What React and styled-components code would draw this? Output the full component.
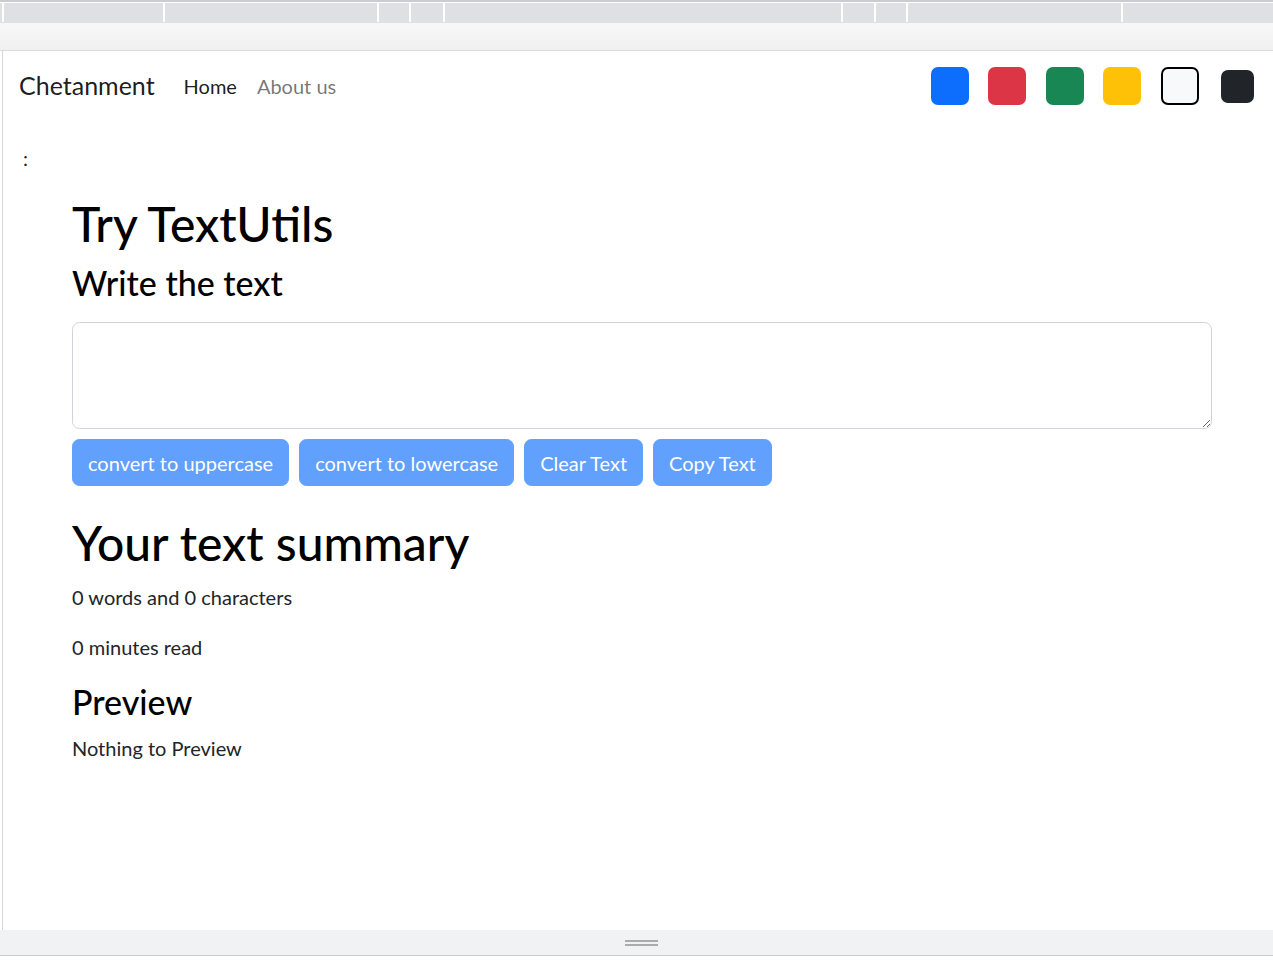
import React from 'react';
import styled, { createGlobalStyle } from 'styled-components';

const Global = createGlobalStyle`
  html, body {
    margin: 0;
    padding: 0;
    background: #ffffff;
  }
  body {
    font-family: Lato, "Open Sans", "Liberation Sans", sans-serif;
    color: #212529;
  }
  * {
    box-sizing: border-box;
  }
`;

const Frame = styled.div`
  width: 1273px;
  height: 960px;
  display: flex;
  flex-direction: column;
  overflow: hidden;
`;

const TopLine = styled.div`
  height: 3px;
  background: linear-gradient(#c9ccd2 0 2px, #ffffff 2px 3px);
`;

const TabStrip = styled.div`
  height: 20px;
  background: #dee0e4;
  display: flex;
  padding-left: 2px;
`;

const TabCell = styled.div`
  height: 19px;
  width: ${p => (p.$w ? `${p.$w}px` : 'auto')};
  flex: ${p => (p.$w ? 'none' : '1')};
  border-left: 2px solid #ffffff;
`;

const Toolbar = styled.div`
  height: 28px;
  background: linear-gradient(#f7f8f7, #eff0ef);
  border-bottom: 1px solid #dadbdb;
`;

const Viewport = styled.div`
  height: 879px;
  margin-left: 2px;
  border-left: 1px solid #d6d7d8;
  background: #ffffff;
  display: flex;
  flex-direction: column;
`;

const BottomBar = styled.div`
  height: 26px;
  background: #f1f2f4;
  border-bottom: 1px solid #c8cbd0;
  display: flex;
  align-items: center;
  justify-content: center;
`;

const Handle = styled.div`
  width: 33px;
  height: 6px;
  border-top: 2px solid #a9abae;
  border-bottom: 2px solid #a9abae;
  margin-left: 9px;
`;

const Navbar = styled.nav`
  height: 70px;
  padding: 0 16px;
  display: flex;
  align-items: center;
`;

const Brand = styled.a`
  font-size: 25px;
  color: rgba(0, 0, 0, 0.9);
  margin-right: 19px;
  line-height: 1.5;
  text-decoration: none;
`;

const NavLink = styled.a`
  font-size: 20px;
  padding: 0 10px;
  color: ${p => (p.$active ? 'rgba(0, 0, 0, 0.9)' : 'rgba(0, 0, 0, 0.55)')};
  text-decoration: none;
`;

const Swatches = styled.div`
  margin-left: auto;
  display: flex;
  align-items: center;
  gap: 19.5px;
  padding-right: 1px;
`;

const Swatch = styled.div`
  width: ${p => (p.$small ? 33 : 38)}px;
  height: ${p => (p.$small ? 33 : 38)}px;
  margin: ${p => (p.$small ? '0 2.5px' : '0')};
  border-radius: 7px;
  background: ${p => p.$color};
  border: ${p => (p.$outline ? '2px solid #000' : 'none')};
`;

const Colon = styled.div`
  height: 30px;
  margin-top: 22px;
  padding-left: 20px;
  font-size: 20px;
  line-height: 30px;
`;

const Container = styled.main`
  width: 1140px;
  margin-left: 69px;
  padding-top: 22px;
`;

const H1 = styled.h1`
  margin: 0 0 10px;
  font-size: 48px;
  font-weight: 500;
  line-height: 1.2;
  color: #000;
`;

const H2 = styled.h2`
  margin: 0 0 ${p => p.$mb || 10}px;
  font-size: 34px;
  font-weight: 500;
  line-height: 1.2;
  color: #000;
`;

const TextArea = styled.textarea`
  display: block;
  width: 1140px;
  height: 107px;
  border: 1px solid #d0d4d9;
  border-radius: 7.5px;
  padding: 7px 15px;
  font-family: inherit;
  font-size: 20px;
  resize: vertical;
  outline: none;
`;

const ButtonRow = styled.div`
  display: flex;
  gap: 10px;
  margin-top: 10px;
`;

const Button = styled.button`
  font-family: inherit;
  font-size: 20px;
  line-height: 30px;
  padding: 7.5px 15px;
  color: #ffffff;
  background: #0d6efd;
  border: 1px solid #0d6efd;
  border-radius: 7.5px;
  opacity: 0.65;
`;

const Summary = styled.section`
  padding-top: 28px;
`;

const P = styled.p`
  margin: 0 0 20px;
  font-size: 20px;
  line-height: 30px;
`;

const tabs = [161, 214, 32, 34, 398, 33, 32, 215, null];
const swatches = [
  { color: '#0d6efd' },
  { color: '#dc3545' },
  { color: '#198754' },
  { color: '#ffc107' },
  { color: '#f8f9fa', outline: true },
  { color: '#212529', small: true },
];

function App() {
  return (
    <>
      <Global />
      <Frame>
        <TopLine />
        <TabStrip>
          {tabs.map((w, i) => (
            <TabCell key={i} $w={w} />
          ))}
        </TabStrip>
        <Toolbar />
        <Viewport>
          <Navbar>
            <Brand href="#">Chetanment</Brand>
            <NavLink href="#" $active>Home</NavLink>
            <NavLink href="#">About us</NavLink>
            <Swatches>
              {swatches.map((s, i) => (
                <Swatch key={i} $color={s.color} $outline={s.outline} $small={s.small} />
              ))}
            </Swatches>
          </Navbar>
          <Colon>:</Colon>
          <Container>
            <H1>Try TextUtils</H1>
            <H2 $mb={19}>Write the text</H2>
            <TextArea />
            <ButtonRow>
              <Button disabled>convert to uppercase</Button>
              <Button disabled>convert to lowercase</Button>
              <Button disabled>Clear Text</Button>
              <Button disabled>Copy Text</Button>
            </ButtonRow>
            <Summary>
              <H1>Your text summary</H1>
              <P>0 words and 0 characters</P>
              <P>0 minutes read</P>
              <H2>Preview</H2>
              <P>Nothing to Preview</P>
            </Summary>
          </Container>
        </Viewport>
        <BottomBar>
          <Handle />
        </BottomBar>
      </Frame>
    </>
  );
}

export default App;
